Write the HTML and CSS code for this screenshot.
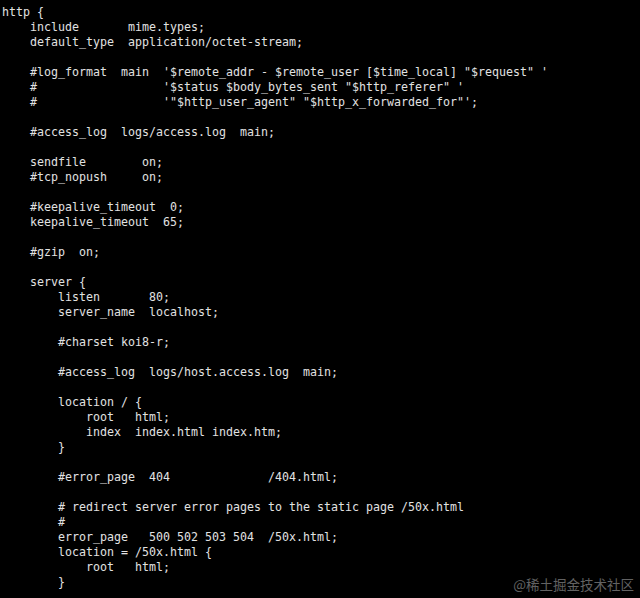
FILE: index.html
```html
<!DOCTYPE html>
<html>
<head>
<meta charset="utf-8">
<link rel="stylesheet" href="styles.css">
</head>
<body>
<div class="term">
<pre class="code">http {
    include       mime.types;
    default_type  application/octet-stream;

    #log_format  main  '$remote_addr - $remote_user [$time_local] "$request" '
    #                  '$status $body_bytes_sent "$http_referer" '
    #                  '"$http_user_agent" "$http_x_forwarded_for"';

    #access_log  logs/access.log  main;

    sendfile        on;
    #tcp_nopush     on;

    #keepalive_timeout  0;
    keepalive_timeout  65;

    #gzip  on;

    server {
        listen       80;
        server_name  localhost;

        #charset koi8-r;

        #access_log  logs/host.access.log  main;

        location / {
            root   html;
            index  index.html index.htm;
        }

        #error_page  404              /404.html;

        # redirect server error pages to the static page /50x.html
        #
        error_page   500 502 503 504  /50x.html;
        location = /50x.html {
            root   html;
        }</pre>
<div class="watermark">@稀土掘金技术社区</div>
</div>
</body>
</html>
```
FILE: styles.css
```css
html, body {
  margin: 0;
  padding: 0;
  background: #000;
}
.term {
  position: relative;
  width: 640px;
  height: 598px;
  overflow: hidden;
  background: #000;
}
.code {
  margin: 0;
  padding: 5px 0 0 2px;
  font-family: "DejaVu Sans Mono", "Liberation Mono", monospace;
  font-size: 11.63px;
  line-height: 15px;
  color: #e2e2e2;
  white-space: pre;
}
.watermark {
  position: absolute;
  right: 6px;
  bottom: 6px;
  font-family: "Noto Sans CJK SC", "Noto Sans", sans-serif;
  font-size: 13.5px;
  line-height: 16px;
  color: #626262;
}
```
